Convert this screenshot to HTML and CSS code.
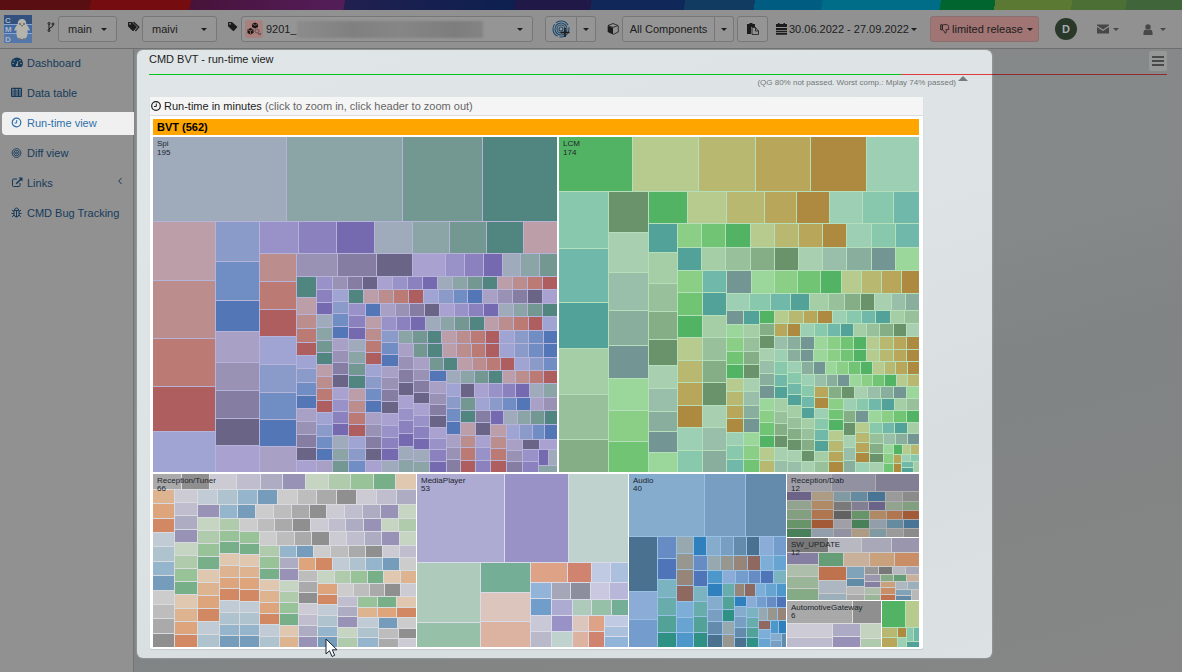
FILE: index.html
```html
<!DOCTYPE html>
<html lang="en">
<head>
<meta charset="utf-8">
<title>CMD BVT - run-time view</title>
<link rel="stylesheet" href="styles.css">
</head>
<body>
<div class="brand-strip"></div>
<header class="topbar">
  <a class="logo" href="#" aria-label="CMD home">
    <svg viewBox="0 0 28 28" width="28" height="28">
      <rect width="28" height="28" fill="#32517f"/>
      <rect y="10" width="28" height="8" fill="#416aa5"/><rect y="19" width="28" height="9" fill="#5377ab"/>
      <path d="M0 9.500H28M0 18.500H28" stroke="#8ca6cb"/>
      <text class="logo-letter" x="1" y="8">C</text><text class="logo-letter" x="1" y="17">M</text><text class="logo-letter" x="1" y="27">D</text>
      <path d="M18 4c-3 0-4.500 2-4.200 5-1.800 2-3.600 5-3.600 7l2.300-1c-.5 4 .5 8 2.500 9h6c2-1 3-5 2.500-9l2.300 1c0-2-1.800-5-3.600-7C22.500 6 21 4 18 4z" fill="#b4b4ad"/>
      <path d="M15.500 8.500l1 1M20.500 8.500l-1 1" stroke="#333" stroke-width="1.200"/><path d="M17 10h2l-1 2z" fill="#665b45"/>
      <path d="M14 24h3M19 24h3" stroke="#777" stroke-width="1.500"/>
    </svg>
  </a>
  <svg class="ico ico-branch" viewBox="0 0 8 10" width="8" height="10"><g fill="none" stroke="currentColor"><circle cx="2" cy="1.500" r="1"/><circle cx="2" cy="8.500" r="1"/><circle cx="6" cy="2" r="1"/><path d="M2 2.500v5M6 3c0 3-4 2-4 4.500"/></g></svg>
  <button class="btn btn-main" type="button"><span>main</span><i class="caret"></i></button>
  <svg class="ico ico-tags" viewBox="0 0 12 11" width="12" height="11"><path d="M0 1.500Q0 1 .6 1H4l4.600 4.400q.5.600 0 1.200L5.600 9.700q-.6.500-1.200 0L0 5.200zM2 2a.8.8 0 1 0 .1 0z" fill="currentColor" fill-rule="evenodd"/><path d="M5.500 1L10.800 6l-3.400 4" fill="none" stroke="currentColor" stroke-width="1.200"/></svg>
  <button class="btn btn-maivi" type="button"><span>maivi</span><i class="caret"></i></button>
  <svg class="ico ico-tag" viewBox="0 0 10 11" width="10" height="11"><path d="M0 1.500Q0 1 .6 1H4l5 4.400q.6.600 0 1.200L6 9.700q-.6.500-1.200 0L0 5.200zM2 2a.8.8 0 1 0 .1 0z" fill="currentColor" fill-rule="evenodd"/></svg>
  <button class="btn btn-build" type="button">
    <span class="build-icon"><svg viewBox="0 0 16 14" width="16" height="14"><path d="M6 2l3-1.500 3 1.500v3l-3 1.500L6 5zM1.500 7.500l3-1.500 3 1.500v3.500l-3 1.500-3-1.500z" fill="#171313"/><path d="M2 7.700l2.500 1.200L7 7.700M6.500 2.200L9 3.400l2.500-1.200M4.500 9v3" stroke="#9f7370" fill="none" stroke-width=".8"/><path d="M9 8l2-1 2 1v2l-2 1-2-1zM12 11.500h3l-1.500 1.700z" fill="none" stroke="#57413f" stroke-width=".7"/></svg></span>
    <span>9201_</span><span class="redacted"></span><i class="caret"></i>
  </button>
  <div class="split split-print">
    <button class="btn" type="button" aria-label="Add fingerprint">
      <svg viewBox="0 0 20 20" width="20" height="20"><g fill="none" stroke="#1c4a70" stroke-width="1.100"><circle cx="10" cy="10" r="2"/><circle cx="10" cy="10" r="4"/><circle cx="10" cy="10" r="6"/><circle cx="10" cy="10" r="8" stroke-dasharray="14 2"/></g><path d="M14 9v9M9.500 13.500h9" stroke="#1c1c1c" stroke-width="1.600"/></svg>
    </button><button class="btn" type="button" aria-label="Fingerprint menu"><i class="caret"></i></button>
  </div>
  <svg class="ico ico-cube" viewBox="0 0 12 12" width="12" height="12"><path d="M6 .5l5 2-5 2-5-2z" fill="none" stroke="currentColor" stroke-width=".8"/><path d="M.7 2.800L6 5v6.500L.7 9z" fill="currentColor"/><path d="M11.300 2.800V9L6 11.500" fill="none" stroke="currentColor" stroke-width=".8"/></svg>
  <div class="split split-comp">
    <button class="btn" type="button">All Components</button><button class="btn" type="button" aria-label="Component menu"><i class="caret"></i></button>
  </div>
  <button class="btn btn-paste" type="button" aria-label="Paste"><svg viewBox="0 0 12 12" width="12" height="12"><path d="M0 1h2.500V0h3v1H8v3H4v7H0z" fill="#1c1c1c"/><path d="M5 4.500h3.500L11.500 8v3.500H5z" fill="#919191" stroke="#1c1c1c" stroke-width=".8"/><path d="M8.500 4.500V8h3" fill="none" stroke="#1c1c1c" stroke-width=".8"/></svg></button>
  <button class="plain btn-date" type="button"><svg viewBox="0 0 11 12" width="11" height="12"><path d="M0 1h11v3H0zM0 5h11v2H0zM0 7.700h11v1.600H0zM0 10h11v1.700H0zM2 0h1.500v2H2zM7.500 0H9v2H7.500z" fill="#1c1c1c"/></svg><span>30.06.2022 - 27.09.2022</span><i class="caret"></i></button>
  <button class="btn btn-limited" type="button"><svg viewBox="0 0 10 10" width="10" height="10"><path d="M.6.800h1.700v5H.6zM2.300 1.200C4 .3 6 .5 7.500.8c1 .4 1.300 2.700 1.200 4.800H6c.5 1.300.4 3.600-.5 3.600S4.500 7.300 3.600 6.500L2.300 5.600z" fill="none" stroke="#1c1c1c" stroke-width=".8"/></svg><span>limited release</span><i class="caret"></i></button>
  <a class="avatar" href="#">D</a>
  <button class="plain user-tool tool-mail" type="button" aria-label="Messages"><svg viewBox="0 0 12 10" width="12" height="10"><path d="M0 .5h12v1L6 5.500 0 1.500zM0 3l6 4 6-4v6.500H0z" fill="#474747"/></svg><i class="caret"></i></button>
  <button class="plain user-tool tool-user" type="button" aria-label="Account"><svg viewBox="0 0 10 11" width="10" height="11"><circle cx="5" cy="3" r="2.700" fill="#474747"/><path d="M.5 11V8.500Q.6 6 2.500 5.500q2.500 1.500 5 0 1.900.5 2 3V11z" fill="#474747"/></svg><i class="caret"></i></button>
</header>

<div class="layout">
  <nav class="sidebar">
    <a href="#"><svg viewBox="0 0 12 11" width="12" height="11"><path d="M1.500 10Q0 8.500 0 6.500a6 6 0 0 1 12 0Q12 8.500 10.500 10z" fill="currentColor"/><path d="M6 8l1-4" stroke="#919191"/><g fill="#919191"><circle cx="2" cy="6.500" r=".8"/><circle cx="3.200" cy="3.700" r=".8"/><circle cx="10" cy="6.500" r=".8"/><circle cx="9" cy="3.700" r=".8"/><circle cx="6" cy="8" r="1.200"/></g></svg><span>Dashboard</span></a>
    <a href="#"><svg viewBox="0 0 12 11" width="12" height="11"><path d="M.5 1.500h10v8H.5zM.5 4h10M.5 6h10M.5 8h10M4 2v8M7.500 2v8" fill="none" stroke="currentColor"/><path d="M.5 1.500h10" stroke="currentColor" stroke-width="1.500"/></svg><span>Data table</span></a>
    <a class="active" href="#" aria-current="page"><svg viewBox="0 0 12 11" width="12" height="11"><circle cx="5.500" cy="5.500" r="4.300" fill="none" stroke="currentColor" stroke-width="1.200"/><path d="M5.700 3v3H3.500" fill="none" stroke="currentColor"/></svg><span>Run-time view</span></a>
    <a href="#"><svg viewBox="0 0 12 11" width="12" height="11"><g fill="none" stroke="currentColor" stroke-width=".9"><circle cx="5.500" cy="6" r="1"/><circle cx="5.500" cy="6" r="2.700"/><circle cx="5.500" cy="6" r="4.400"/></g></svg><span>Diff view</span></a>
    <a href="#"><svg viewBox="0 0 12 11" width="12" height="11"><path d="M6 2H2.500Q1.500 2 1.500 3v5.500q0 1 1 1H8q1 0 1-1V6" fill="none" stroke="currentColor"/><path d="M7.500.5h4v4L10 3.200 5.700 7.300l-1-1L9 2z" fill="currentColor"/></svg><span>Links</span><svg class="fold" viewBox="0 0 4 8" width="4" height="8"><path d="M3.500 1L.7 4l2.800 3" fill="none" stroke="currentColor"/></svg></a>
    <a href="#"><svg viewBox="0 0 12 11" width="12" height="11"><path d="M3 3.500h5v4Q7.500 10 5.500 10T3 7.500zM5.500 4v6M3.500 3Q3.700 1 5.500 1t2 2M3 4.500L1 3M8 4.500L10 3M3 6.500H.5M8 6.500h2.500M3 8L1.200 10M8 8l1.800 2" fill="none" stroke="currentColor"/></svg><span>CMD Bug Tracking</span></a>
  </nav>

  <main class="content">
    <div class="spotlight"></div>
    <section class="page-head">
      <div class="title-row"><h1>CMD BVT - run-time view</h1><button class="menu" type="button" aria-label="Page menu"><svg viewBox="0 0 12 10" width="12" height="10"><path d="M0 1h12M0 5h12M0 9h12" stroke="#303030" stroke-width="1.500"/></svg></button></div>
      <div class="gate-line"></div>
      <p class="gate-note"><span>(QG 80% not passed. Worst comp.: Mplay 74% passed)</span><i class="marker"></i></p>
    </section>
    <section class="panel">
      <h2><svg viewBox="0 0 12 12" width="12" height="12"><circle cx="6" cy="6" r="4.300" fill="none" stroke="currentColor" stroke-width="1.200"/><path d="M6.300 3.500v3H4" fill="none" stroke="currentColor"/></svg><span>Run-time in minutes <small>(click to zoom in, click header to zoom out)</small></span></h2>
      <div class="chart">
        <button class="root" type="button">BVT (562)</button>
        <svg id="treemap" class="treemap" viewBox="153 137 766 510" shape-rendering="crispEdges" role="img" aria-label="Run-time treemap"></svg>
        <svg class="pointer" viewBox="0 0 13 20" width="13" height="20"><path d="M1 1v15l3.500-3.300L7 18.500l2.700-1.200L7.300 11.800H12z" fill="#fff" stroke="#1b2333"/></svg>
      </div>
    </section>
  </main>
</div>
<script src="treemap.js"></script>
</body>
</html>
```
FILE: styles.css
```css
* { box-sizing: border-box; }
body {
  margin: 0;
  min-height: 100vh;
  display: flex;
  flex-direction: column;
  background: #919191;
  color: #1c1c1c;
  font: 11px/16px "Liberation Sans", Arial, sans-serif;
}
button { font: inherit; color: inherit; margin: 0; cursor: pointer; }
a { color: inherit; text-decoration: none; }
svg { display: block; flex: none; }

.brand-strip {
  height: 10px;
  background: linear-gradient(100deg, #590e11 0 7.7%, #750c10 7.7% 16.1%, #47133a 16.2%, #541e5a 29.1%, #20204f 29.2%, #0c2050 43.500%, #201847 43.600% 50%, #10275a 50% 57.900%, #113b60 57.900% 63.800%, #005c80 63.800% 69.500%, #006d88 69.500% 79.500%, #00652f 79.500% 84.100%, #5b7933 84.100% 90.600%, #4c6f35 90.600% 95.200%, #41653b 95.200%);
}
.topbar {
  height: 39px;
  display: flex;
  align-items: center;
  padding: 0 16px 0 4px;
  border-bottom: 1px solid #6e6e6e;
  background: #919191;
}
.logo-letter { font: bold 8px "Liberation Sans", Arial, sans-serif; fill: #aab4c4; }
.caret {
  flex: none;
  border: 3px solid transparent;
  border-top-color: currentColor;
  border-bottom: 0;
}
.btn {
  height: 26px;
  display: flex;
  align-items: center;
  border: 1px solid #777;
  border-radius: 3px;
  background: #959595;
  padding: 0 9px;
  white-space: nowrap;
}
.btn > .caret:last-child { margin-left: auto; }
.plain { display: flex; align-items: center; border: 0; background: none; padding: 0; white-space: nowrap; }
.ico { margin-bottom: 5px; }
.ico-branch { margin-left: 15px; margin-right: 3px; }
.ico-tags { margin-left: 11px; margin-right: 2px; }
.ico-tag { margin-left: 11px; margin-right: 3px; }
.ico-cube { margin: 0 3px 0 11px; }
.btn-main { width: 59px; }
.btn-maivi { width: 75px; }
.btn-build { flex: 0 1 292px; min-width: 120px; padding: 0 9px 0 3px; }
.build-icon { width: 18px; height: 18px; margin-right: 3px; border-radius: 3px; background: #a8807e; display: grid; place-items: center; }
.redacted { flex: 0 1 186px; height: 17px; background: linear-gradient(90deg, #8c8c8c, #808080 30%, #868686 55%, #7d7d7d 85%, #848484); filter: blur(1px); }
.split { display: flex; }
.split .btn + .btn { border-left: 0; border-radius: 0 3px 3px 0; padding: 0 6px; }
.split .btn:first-child { border-radius: 3px 0 0 3px; }
.split-print { margin-left: 12px; }
.split-print .btn:first-child { padding: 0 5px; }
.split-comp .btn:first-child { width: 93px; padding: 0; justify-content: center; }
.btn-paste { margin-left: 3px; width: 31px; padding: 0; justify-content: center; }
.btn-date { margin-left: 8px; gap: 2px; }
.btn-limited { margin-left: auto; width: 109px; gap: 2px; background: #a07573; border-color: #8a7070; }
.btn-limited .caret:last-child { margin-left: 2px; }
.avatar { margin-left: 16px; width: 22px; height: 22px; border-radius: 50%; background: #293829; color: #a5acb4; font-weight: bold; line-height: 22px; text-align: center; }
.user-tool { color: #474747; gap: 4px; }
.tool-mail { margin-left: 20px; }
.tool-user { margin-left: 24px; gap: 7px; }

.layout { flex: 1; display: grid; grid-template-columns: 134px minmax(0, 1fr); }
.sidebar { display: flex; flex-direction: column; gap: 7px; padding-top: 3px; border-right: 1px solid #737575; color: #163b5a; }
.sidebar a { height: 23px; margin-left: 2px; padding: 0 0 2px 9px; display: flex; align-items: center; gap: 4px; white-space: nowrap; }
.sidebar .fold { margin: 0 11px 4px auto; }
.sidebar .active { margin-right: -3px; border-radius: 4px 0 0 4px; background: #f0f0f0; color: #2f70ab; }

.content {
  display: grid;
  grid-template-columns: minmax(0, 1fr) 190px;
  grid-template-rows: auto 1fr;
  padding: 1px 0 14px 3px;
  background: linear-gradient(165deg, #85888a, #858989 45%, #808484 60%, #868686);
}
.spotlight { grid-column: 1; grid-row: 1 / 3; border-radius: 6px; background: linear-gradient(160deg, #e0e6e8, #dde2e4 50%, #d8dee0 75%, #dce1e3); box-shadow: 0 0 2px #b5baba; }
.page-head { grid-column: 1 / 3; grid-row: 1; z-index: 1; padding: 0 15px 0 12px; height: 47px; }
.title-row { height: 24px; display: flex; justify-content: space-between; align-items: flex-start; }
h1 { margin: 1px 0 0; font-size: 11px; font-weight: normal; line-height: 16px; }
.menu { width: 18px; height: 20px; margin-top: 1px; padding: 0; display: grid; place-items: center; border: 0; border-radius: 2px; background: #969797; }
.gate-line { height: 1px; background: linear-gradient(90deg, #00c31a 73.900%, #df3d3d 73.900% 82.800%, #93292b 82.800%); }
.gate-note { margin: 0 199px 0 0; display: flex; justify-content: flex-end; gap: 2px; font-size: 8px; line-height: 16px; color: #747878; }
.marker { height: 5px; margin-top: 1px; border: 5px solid transparent; border-top: 0; border-bottom-color: #777b7c; }
.panel { grid-column: 1; grid-row: 2; z-index: 1; align-self: start; margin: 0 69px 9px 13px; background: #fff; border-radius: 2px; box-shadow: 0 1px 1px #c4c9cb; }
h2 { margin: 0; height: 19px; display: flex; align-items: center; gap: 2px; background: #f5f5f5; border-bottom: 1px solid #ddd; font-size: 11px; line-height: 18px; font-weight: normal; }
h2 small { font-size: 11px; color: #666; }
.chart { position: relative; padding: 3px 4px 2px 3px; }
.root { display: block; width: 100%; height: 16px; margin-bottom: 2px; padding: 0 4px; border: 0; background: #ffa500; color: #000; font-weight: bold; line-height: 15px; text-align: left; }
.treemap { width: 100%; height: auto; }
.treemap text { font: 8px "Liberation Sans", Arial, sans-serif; fill: #20242a; shape-rendering: auto; }
.pointer { position: absolute; left: 22.700%; bottom: -9px; }
```
FILE: treemap.js
```javascript
// Each strip is r (row) or c (column), its far edge, then either the cell
// edges inside it (":a,b,c") or a count of equal cells ("*n").
var greens = "53b365 b8cb8e b8b870 b8a65a ad8a40 9ccfb3 88c8ac 70b8a9 52a29a a5cea6 98c09a 85ad86 6a926b a8d0b0 99bfab 89ae9d 739593 9bd79a 8bcf87 72c475";
var groups = [
  { name: "Spi", total: 195, box: [153, 137, 557, 472], line: "#b6b3d9",
    colors: "9fabbb 8ba4a6 739791 518680 bb9ea8 bb8d8d bb7b74 ae5e5e 9fa4d2 8a9bc9 708ec4 5276b6 a8a1c5 9992b5 857ea2 6a6487 a9a2d1 9992c8 8b81be 7569b0",
    strips: "r222:287,403,483,558 c216:281,339,387,432,473 c260:262,301,332,363,391,419,446,473 r254:299,337,375,413,450,487,524,558 c297:282,310,337,365,393,420,447,473 r277:338,377,413,446,465,484,503,521,540,558 c317:298,315,329,343,356,369,383,396,409,422,435,448,461,473 c333:290,303,315,328,341,353,365,377,389,401,413,425,437,449,461,473 r290*15 c349*15 r304*14 c366*14 r317*13 c382*13 r331*12 c399*12 r344*11 c414*10 r358*10 c430*10 r371*9 c447*9 r384*8 c461*7 r398*7 c476*6 r411*6 c491*5 r425*5 c507*4 r440*4 c523*3 r450:540,558 c539*2 r466:549,558 c558*1" },
  { name: "LCM", total: 174, box: [559, 137, 919, 472], line: "#b5dfba", colors: greens,
    strips: "r192:633,699,756,811,867,920 c609:249,303,349,395,440,473 c649:233,273,311,346,379,411,442,473 r224:688,727,765,797,830,863,894,920 c678:253,284,312,340,366,389,412,432,453,473 r248*10 r271*10 c703*9 c727*9 r294:752,775,798,821,842,862,882,902,920 r311:750,771,791,810,829,845,861,875,892,906,920 c744*12 c760*12 r324*11 c775*12 r337*11 r350*11 c788*10 r362*10 c802*10 r375*10 c815*9 r387*9 c829*8 r399*7 c844*7 r411*6 c856*5 r423*5 c870*5 r434*4 c884*4 r445*3 c894*3 r455*3 c902*2 r462*2 c914*2 c920*1" },
  { name: "Reception/Tuner", total: 66, box: [153, 474, 416, 647], line: "#d7dade",
    colors: "aaaaaa 8f8f8f cccbd4 bfbdce aeacc3 9992b7 c5d5c2 afcbac 98c298 77af88 dfc7b0 deb490 dea47c d18863 c1cbd5 aec3cd 94b5cb 759dbb cccccc bdbdbd",
    strips: "r490:182,210,237,261,283,306,329,351,374,396,417 c175*11 c198*12 r505*11 c220*11 r519*11 c240*11 r532*10 c260*10 r546*9 c280*9 r558*8 c299*8 r571*7 c318*7 r584*6 c338*6 r597*5 c358*5 r608*3 r618*3 c379*3 r629:398,417 c399*2 c417*2" },
  { name: "MediaPlayer", total: 53, box: [417, 474, 628, 647], line: "#dadbe8",
    colors: "adabd2 9992c6 c0d2cd aecaba 96c0a8 74ae97 dcc5bd dcb2a1 dea287 d0846f c0cbe3 aac0dd 92b4d8 719dcb c8c8d7 b9b9ca a5a7b8 8c8d9d cac8e0 b9b7d9",
    strips: "r563:505,569,629 c481:623,648 c531:593,622,648 r583:568,592,611,629 c552*4 r600*4 c573*3 r616:592,612,629 c589*2 c605*2 c629*3" },
  { name: "Audio", total: 40, box: [629, 474, 786, 647], line: "#98c0e3",
    colors: "86accd 789fc1 658bac 4a7190 8aacd6 749dce 678cc4 5074b8 7bb3c0 68adab 52a297 2f9184 98a8af 97978f 97857a 8f6860 7daed7 67a4d2 4d97cb 3080bd",
    strips: "r537:705,746,787 c658:592,620,648 c677:559,580,598,616,633,648 c694:554,570,586,602,618,633,648 r556*7 c708*6 r571*6 c723*6 r584*5 c735*5 r597*5 c747*5 r608*4 c759*4 r621*3 c771*3 r634*2 c782*2 c787*1" },
  { name: "Reception/Dab", total: 12, box: [787, 474, 919, 537], line: "#adadb0",
    colors: "a09fa8 9291a2 827f95 6b6488 92a38f 829f80 68946a 48805a ae9b84 b08a65 b07650 a35a37 929fab 809aa4 658ba0 487595 9a9a9a 8b8b8b 7a7a7a 626262",
    strips: "r492:832,876,920 c812*5 c834*5 r502*5 c852*4 r511*4 c870*3 r520*3 c887*2 r529*2 r538*2" },
  { name: "SW_UPDATE", total: 12, box: [787, 538, 919, 600], line: "#cacaca",
    colors: "787878 b8b8c0 a9a8b8 9a96ae 857fa2 adbeab 9ab598 85ab86 649d76 c9b09b c9a17c c98e66 be724e acb7c2 9bb0bb 80a3b9 628ba8 b8b8b8 a9a9a9 979797",
    strips: "r553:829,862,892,920 c819:565,577,589,601 r567:844,870,895,920 c847:581,594,601 c865:579,587,595,601 r575*4 c881*4 r582*3 c896*3 r590*2 c912*2 c920*1" },
  { name: "AutomotiveGateway", total: 6, box: [787, 601, 881, 647], line: "#dcdcdc",
    colors: "a9a9a9 8f8f8f cccbd6 bdbbce adaac5 9790b7 c3d3c0 afcaac",
    strips: "r624:853,882 c833:638,648 c861:637,648 c882:639,648" },
  { name: "", total: "", box: [882, 601, 919, 647], line: "#b5dfba", colors: greens,
    strips: "r628:906,920 c898*2 c907*2 r642*2 r648*1" }
];

var svg = document.getElementById("treemap");

function add(tag, attrs, text) {
  var el = document.createElementNS("http://www.w3.org/2000/svg", tag);
  for (var key in attrs) el.setAttribute(key, attrs[key]);
  if (text !== undefined) el.textContent = text;
  svg.appendChild(el);
}

function cell(x0, y0, x1, y1, fill) {
  add("rect", { x: x0, y: y0, width: x1 - x0, height: y1 - y0, fill: fill });
}

add("rect", { x: 153, y: 137, width: 766, height: 510, fill: "#fff" });

groups.forEach(function (g) {
  var colors = g.colors.split(" ");
  var x = g.box[0], y = g.box[1], right = g.box[2] + 1, bottom = g.box[3] + 1, n = 0;
  cell(x, y, g.box[2], g.box[3], g.line);
  g.strips.split(" ").forEach(function (s) {
    var m = s.match(/^([rc])(\d+)([:*])(.+)$/);
    var row = m[1] === "r", far = +m[2], start = row ? x : y, end = row ? right : bottom, edges;
    if (m[3] === "*") {
      edges = [];
      for (var i = 1; i <= +m[4]; i++) edges.push(Math.round(start + (end - start) * i / +m[4]));
    } else {
      edges = m[4].split(",").map(Number);
    }
    edges.forEach(function (edge) {
      var fill = "#" + colors[n++ % colors.length];
      if (row) cell(start, y, edge - 1, far - 1, fill);
      else cell(x, start, far - 1, edge - 1, fill);
      start = edge;
    });
    if (row) y = far; else x = far;
  });
  if (g.name) {
    var gap = g.box[1] === 137 ? 9 : 8;
    add("text", { x: g.box[0] + 4, y: g.box[1] + 9 }, g.name);
    add("text", { x: g.box[0] + 4, y: g.box[1] + 9 + gap }, g.total);
  }
});
```
